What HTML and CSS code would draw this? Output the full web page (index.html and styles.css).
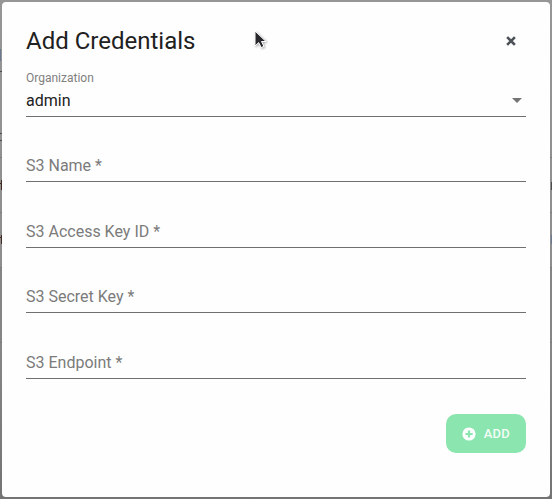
FILE: index.html
```html
<!DOCTYPE html>
<html lang="en">
<head>
<meta charset="utf-8">
<title>Add Credentials</title>
<link rel="stylesheet" href="styles.css">
</head>
<body>
<svg class="backdrop" width="552" height="499" viewBox="0 0 552 499" aria-hidden="true">
  <path fill="#858585" d="M0 268h2v74H0zM550 268h2v74h-2z"/>
  <path fill="#7c7c7c" d="M0 157h2v1H0zM0 212h2v1H0zM0 267h2v1H0zM0 342h2v1H0zM550 157h2v1h-2zM550 212h2v1h-2zM550 267h2v1h-2zM550 342h2v1h-2z"/>
  <path fill="#6a7890" d="M0 49h1v12H0zM551 235h1v9h-1z"/>
  <path fill="#4c4c4c" d="M0 71h2v1H0zM0 133h2v1H0zM0 140h2v1H0zM551 182h1v8h-1z"/>
  <path fill="#432a20" d="M1 180h1v10H1zM0 183h1v1H0zM1 235h1v9H1zM0 237h1v1H0z"/>
</svg>
<main class="dialog">
  <header class="dialog-header">
    <h1>Add Credentials</h1>
    <button class="close" type="button" aria-label="Close">
      <svg width="10" height="10" viewBox="0 0 10 10"><path d="M2 2l6 6M8 2L2 8" stroke="#4c5257" stroke-width="2.5" stroke-linecap="square"/></svg>
    </button>
  </header>
  <form class="fields">
    <div class="field select">
      <span class="label">Organization</span>
      <span class="value">admin</span>
      <svg class="arrow" width="10" height="5" viewBox="0 0 10 5"><path d="M0 0h10L5 5z" fill="#757575"/></svg>
    </div>
    <div class="field"><span class="placeholder">S3 Name *</span></div>
    <div class="field"><span class="placeholder">S3 Access Key ID *</span></div>
    <div class="field"><span class="placeholder">S3 Secret Key *</span></div>
    <div class="field"><span class="placeholder">S3 Endpoint *</span></div>
  </form>
  <footer class="actions">
    <button class="add" type="button">
      <svg width="14" height="14" viewBox="0 0 14 14"><circle cx="7" cy="7" r="6.6" fill="#fff"/><path d="M7 3.4v7.2M3.4 7h7.2" stroke="#8ae5ae" stroke-width="2.2"/></svg>
      <span>ADD</span>
    </button>
  </footer>
</main>
<svg class="cursor" width="16" height="22" viewBox="0 0 16 22" aria-hidden="true"><path d="M2 2v15l3.7-3.4 2.5 5 2.7-1.3-2.4-4.8H13z" fill="#29292d" stroke="#fff" stroke-width="1"/></svg>
</body>
</html>
```
FILE: styles.css
```css
* { box-sizing: border-box; }

body {
  margin: 0;
  height: 499px;
  padding: 2px;
  overflow: hidden;
  background: linear-gradient(#969696, #8c8c8c 60%, #747474);
  font-family: Roboto, "Liberation Sans", sans-serif;
  color: #212121;
}

.backdrop { position: absolute; left: 0; top: 0; }

.dialog {
  position: relative;
  display: flex;
  flex-direction: column;
  height: 495px;
  padding: 24px;
  border-radius: 4px;
  background: #fefefe;
}

.dialog-header {
  display: flex;
  justify-content: space-between;
  align-items: center;
  height: 30px;
}

h1 {
  margin: 0;
  font-size: 24px;
  line-height: 32px;
  font-weight: 400;
}

.close {
  display: flex;
  padding: 0;
  margin-right: 10px;
  border: 0;
  background: none;
}

.fields { display: flex; flex-direction: column; }

.field {
  display: flex;
  align-items: flex-end;
  height: 65.4px;
  padding-bottom: 5px;
  border-bottom: 1px solid #707070;
  font-size: 16px;
  line-height: 20px;
}

.select {
  position: relative;
  height: 61px;
  flex-direction: column;
  align-items: flex-start;
  justify-content: flex-end;
}

.label {
  font-size: 12px;
  line-height: 14px;
  margin-bottom: 6px;
  color: #808080;
}

.placeholder { color: #7b7b7b; }

.arrow { position: absolute; right: 4px; bottom: 13px; }

.actions {
  display: flex;
  justify-content: flex-end;
  margin-top: 35.4px;
}

.add {
  display: flex;
  align-items: center;
  justify-content: flex-start;
  gap: 8px;
  width: 80px;
  height: 39px;
  padding: 1px 0 0 15.8px;
  border: 0;
  border-radius: 10px;
  background: #8ae5ae;
  color: #f3fdf7;
  font: 500 13px/20px Roboto, sans-serif;
  letter-spacing: 0.15px;
}

.cursor { position: absolute; left: 253px; top: 29px; filter: drop-shadow(1px 1px 1px #0005); }
```
